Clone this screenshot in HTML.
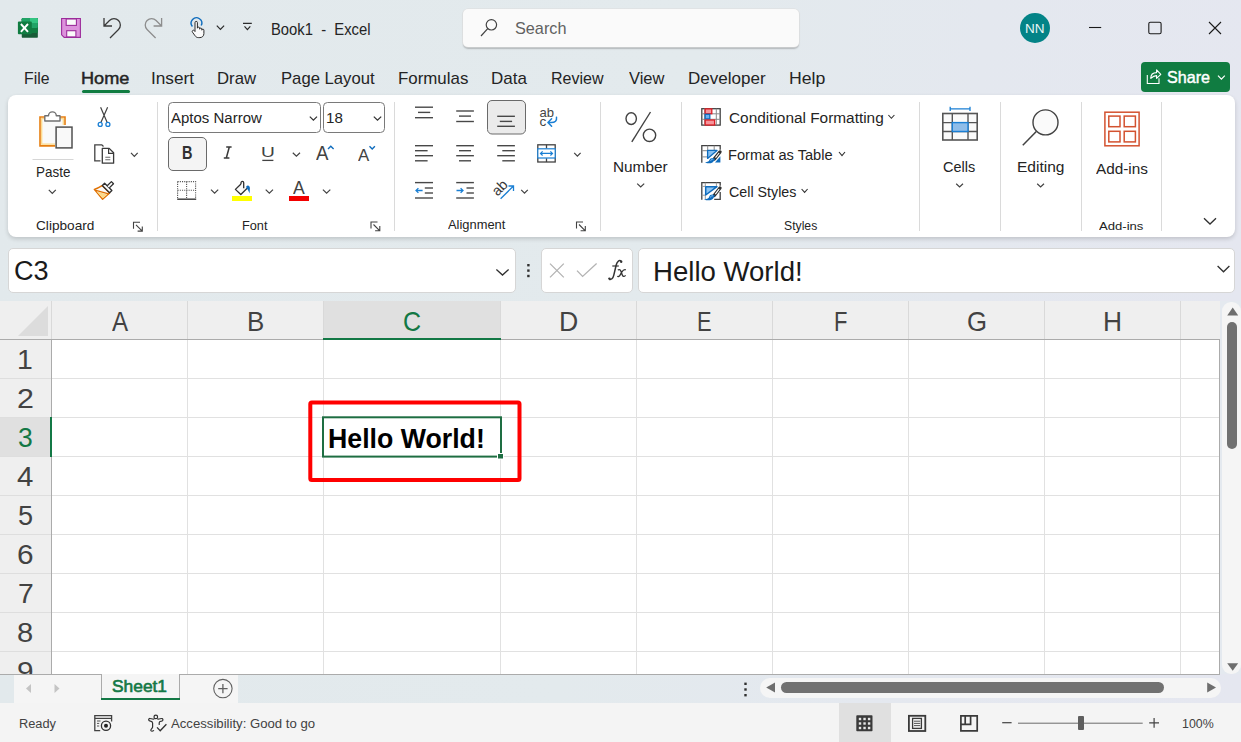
<!DOCTYPE html>
<html><head><meta charset="utf-8">
<style>
*{box-sizing:border-box;margin:0;padding:0}
html,body{width:1241px;height:742px;overflow:hidden;background:#e4e9ef;font-family:"Liberation Sans",sans-serif;color:#242424}
.abs{position:absolute}
svg{position:absolute;overflow:visible}
.t{position:absolute;white-space:nowrap;line-height:1;transform-origin:0 0}
</style></head><body>
<div class="abs" style="left:0;top:0;width:1241px;height:301px;background:linear-gradient(95deg,#e2e9ec 0%,#e3eaed 55%,#e4e8ef 78%,#e5e7f0 100%)"></div>
<!-- ribbon -->
<div class="abs" style="left:8px;top:95px;width:1227px;height:142px;background:#fff;border-radius:8px;box-shadow:0 2px 4px rgba(0,0,0,.16)"></div>
<!-- search -->
<div class="abs" style="left:463px;top:9px;width:336px;height:38px;background:#fafafa;border-radius:5px;box-shadow:0 0 0 0.6px #dedede,0 1.2px 1.5px rgba(0,0,0,.22)"></div>
<!-- avatar -->
<div class="abs" style="left:1020px;top:13px;width:30px;height:30px;border-radius:50%;background:#038387"></div>
<!-- share -->
<div class="abs" style="left:1141px;top:62px;width:89px;height:30px;border-radius:4px;background:#107c41"></div>
<!-- tab underline -->
<div class="abs" style="left:82px;top:90px;width:48px;height:3px;border-radius:2px;background:#107c41"></div>
<!-- formula bar -->
<div class="abs" style="left:8px;top:248px;width:508px;height:45px;background:#fff;border:1px solid #d6d6d6;border-radius:5px"></div>
<div class="abs" style="left:541px;top:248px;width:92px;height:45px;background:#fff;border:1px solid #d6d6d6;border-radius:5px"></div>
<div class="abs" style="left:638px;top:248px;width:597px;height:45px;background:#fff;border:1px solid #d6d6d6;border-radius:5px"></div>
<!-- grid -->
<div class="abs" style="left:0;top:0;width:1241px;height:674px;overflow:hidden">
<div class="abs" style="left:0;top:301px;width:1220px;height:373px;background:#fff"></div>
<div class="abs" style="left:0;top:301px;width:1220px;height:38px;background:#efefef"></div>
<div class="abs" style="left:0;top:339px;width:51px;height:335px;background:#efefef"></div>
<div class="abs" style="left:324px;top:301px;width:176px;height:38px;background:#e0e0e0"></div>
<div class="abs" style="left:0;top:418px;width:51px;height:38px;background:#e0e0e0"></div>
<div class="abs" style="left:51px;top:301px;width:1px;height:38px;background:#d9d9d9"></div>
<div class="abs" style="left:187px;top:301px;width:1px;height:38px;background:#d9d9d9"></div>
<div class="abs" style="left:323px;top:301px;width:1px;height:38px;background:#d9d9d9"></div>
<div class="abs" style="left:500px;top:301px;width:1px;height:38px;background:#d9d9d9"></div>
<div class="abs" style="left:636px;top:301px;width:1px;height:38px;background:#d9d9d9"></div>
<div class="abs" style="left:772px;top:301px;width:1px;height:38px;background:#d9d9d9"></div>
<div class="abs" style="left:908px;top:301px;width:1px;height:38px;background:#d9d9d9"></div>
<div class="abs" style="left:1044px;top:301px;width:1px;height:38px;background:#d9d9d9"></div>
<div class="abs" style="left:1180px;top:301px;width:1px;height:38px;background:#d9d9d9"></div>
<div class="abs" style="left:187px;top:340px;width:1px;height:334px;background:#e1e1e1"></div>
<div class="abs" style="left:323px;top:340px;width:1px;height:334px;background:#e1e1e1"></div>
<div class="abs" style="left:500px;top:340px;width:1px;height:334px;background:#e1e1e1"></div>
<div class="abs" style="left:636px;top:340px;width:1px;height:334px;background:#e1e1e1"></div>
<div class="abs" style="left:772px;top:340px;width:1px;height:334px;background:#e1e1e1"></div>
<div class="abs" style="left:908px;top:340px;width:1px;height:334px;background:#e1e1e1"></div>
<div class="abs" style="left:1044px;top:340px;width:1px;height:334px;background:#e1e1e1"></div>
<div class="abs" style="left:1180px;top:340px;width:1px;height:334px;background:#e1e1e1"></div>
<div class="abs" style="left:52px;top:378px;width:1167px;height:1px;background:#e1e1e1"></div>
<div class="abs" style="left:0;top:378px;width:51px;height:1px;background:#dedede"></div>
<div class="abs" style="left:52px;top:417px;width:1167px;height:1px;background:#e1e1e1"></div>
<div class="abs" style="left:0;top:417px;width:51px;height:1px;background:#dedede"></div>
<div class="abs" style="left:52px;top:456px;width:1167px;height:1px;background:#e1e1e1"></div>
<div class="abs" style="left:0;top:456px;width:51px;height:1px;background:#dedede"></div>
<div class="abs" style="left:52px;top:495px;width:1167px;height:1px;background:#e1e1e1"></div>
<div class="abs" style="left:0;top:495px;width:51px;height:1px;background:#dedede"></div>
<div class="abs" style="left:52px;top:534px;width:1167px;height:1px;background:#e1e1e1"></div>
<div class="abs" style="left:0;top:534px;width:51px;height:1px;background:#dedede"></div>
<div class="abs" style="left:52px;top:573px;width:1167px;height:1px;background:#e1e1e1"></div>
<div class="abs" style="left:0;top:573px;width:51px;height:1px;background:#dedede"></div>
<div class="abs" style="left:52px;top:612px;width:1167px;height:1px;background:#e1e1e1"></div>
<div class="abs" style="left:0;top:612px;width:51px;height:1px;background:#dedede"></div>
<div class="abs" style="left:52px;top:651px;width:1167px;height:1px;background:#e1e1e1"></div>
<div class="abs" style="left:0;top:651px;width:51px;height:1px;background:#dedede"></div>
<div class="abs" style="left:0;top:339px;width:1220px;height:1px;background:#ababab"></div>
<div class="abs" style="left:51px;top:339px;width:1px;height:335px;background:#ababab"></div>
<div class="abs" style="left:1219px;top:339px;width:1px;height:335px;background:#ababab"></div>
<div class="abs" style="left:323px;top:338px;width:178px;height:2px;background:#137845"></div>
<div class="abs" style="left:50px;top:417px;width:2px;height:40px;background:#137845"></div>
<svg style="left:0;top:0" width="1241" height="742"><polygon points="48,306 48,336 18,336" fill="#dcdcdc"/></svg>
<div class="t" style="left:111.90px;top:307.57px;font-size:27.91px;transform:scaleX(0.8664);color:#424242;font-weight:normal;font-style:normal;font-family:'Liberation Sans',sans-serif;">A</div>
<div class="t" style="left:246.93px;top:307.57px;font-size:27.91px;transform:scaleX(0.9290);color:#424242;font-weight:normal;font-style:normal;font-family:'Liberation Sans',sans-serif;">B</div>
<div class="t" style="left:403.25px;top:307.57px;font-size:27.91px;transform:scaleX(0.8958);color:#137845;font-weight:normal;font-style:normal;font-family:'Liberation Sans',sans-serif;">C</div>
<div class="t" style="left:558.87px;top:307.57px;font-size:27.91px;transform:scaleX(0.9556);color:#424242;font-weight:normal;font-style:normal;font-family:'Liberation Sans',sans-serif;">D</div>
<div class="t" style="left:697.25px;top:307.57px;font-size:27.91px;transform:scaleX(0.7818);color:#424242;font-weight:normal;font-style:normal;font-family:'Liberation Sans',sans-serif;">E</div>
<div class="t" style="left:833.74px;top:307.57px;font-size:27.91px;transform:scaleX(0.7883);color:#424242;font-weight:normal;font-style:normal;font-family:'Liberation Sans',sans-serif;">F</div>
<div class="t" style="left:967.21px;top:307.57px;font-size:27.91px;transform:scaleX(0.9230);color:#424242;font-weight:normal;font-style:normal;font-family:'Liberation Sans',sans-serif;">G</div>
<div class="t" style="left:1103.39px;top:307.57px;font-size:27.91px;transform:scaleX(0.9430);color:#424242;font-weight:normal;font-style:normal;font-family:'Liberation Sans',sans-serif;">H</div>
<div class="t" style="left:17.26px;top:345.43px;font-size:28.20px;transform:scaleX(1.0075);color:#424242;font-weight:normal;font-style:normal;font-family:'Liberation Sans',sans-serif;">1</div>
<div class="t" style="left:16.98px;top:384.43px;font-size:28.20px;transform:scaleX(1.0793);color:#424242;font-weight:normal;font-style:normal;font-family:'Liberation Sans',sans-serif;">2</div>
<div class="t" style="left:18.20px;top:423.43px;font-size:28.20px;transform:scaleX(0.9409);color:#137845;font-weight:normal;font-style:normal;font-family:'Liberation Sans',sans-serif;">3</div>
<div class="t" style="left:17.41px;top:462.43px;font-size:28.20px;transform:scaleX(1.0431);color:#424242;font-weight:normal;font-style:normal;font-family:'Liberation Sans',sans-serif;">4</div>
<div class="t" style="left:17.92px;top:501.43px;font-size:28.20px;transform:scaleX(0.9605);color:#424242;font-weight:normal;font-style:normal;font-family:'Liberation Sans',sans-serif;">5</div>
<div class="t" style="left:17.01px;top:540.43px;font-size:28.20px;transform:scaleX(1.0564);color:#424242;font-weight:normal;font-style:normal;font-family:'Liberation Sans',sans-serif;">6</div>
<div class="t" style="left:17.59px;top:579.43px;font-size:28.20px;transform:scaleX(1.0022);color:#424242;font-weight:normal;font-style:normal;font-family:'Liberation Sans',sans-serif;">7</div>
<div class="t" style="left:17.33px;top:618.43px;font-size:28.20px;transform:scaleX(1.0344);color:#424242;font-weight:normal;font-style:normal;font-family:'Liberation Sans',sans-serif;">8</div>
<div class="t" style="left:17.31px;top:657.43px;font-size:28.20px;transform:scaleX(1.0564);color:#424242;font-weight:normal;font-style:normal;font-family:'Liberation Sans',sans-serif;">9</div>
</div>
<!-- vertical scrollbar -->
<div class="abs" style="left:1222px;top:302px;width:19px;height:372px;background:#f5f5f5;border-radius:9px"></div>
<div class="abs" style="left:1227px;top:322px;width:10px;height:127px;background:#717171;border-radius:5px"></div>
<!-- sheet tabs bar -->
<div class="abs" style="left:0;top:674px;width:1241px;height:29px;background:linear-gradient(90deg,#e2e9ec 0%,#e3eaed 45%,#e4e8ef 70%,#e5e7f0 100%)"></div>
<div class="abs" style="left:14px;top:674px;width:224px;height:29px;background:#f5f5f5"></div>
<div class="abs" style="left:0;top:674px;width:101px;height:1px;background:#ababab"></div>
<div class="abs" style="left:180px;top:674px;width:1040px;height:1px;background:#ababab"></div>
<div class="abs" style="left:101px;top:674px;width:1px;height:25px;background:#ababab"></div>
<div class="abs" style="left:179px;top:674px;width:1px;height:25px;background:#ababab"></div>
<div class="abs" style="left:101px;top:698px;width:79px;height:2px;background:#137845"></div>
<div class="abs" style="left:760px;top:678px;width:461px;height:20px;background:#f5f5f5;border-radius:10px"></div>
<div class="abs" style="left:781px;top:682px;width:383px;height:11px;background:#717171;border-radius:6px"></div>
<!-- status bar -->
<div class="abs" style="left:0;top:703px;width:1241px;height:39px;background:#f4f4f4"></div>
<div class="abs" style="left:839px;top:703px;width:52px;height:39px;background:#e0e0e0"></div>
<svg style="left:0;top:0" width="1241" height="742"><rect x="21.75" y="18" width="16.1" height="19.85" rx="1.2" fill="#185c37"/>
<rect x="21.75" y="18" width="16.1" height="15" rx="1.2" fill="#107c41"/>
<rect x="21.75" y="18" width="16.1" height="10" rx="1.2" fill="#21a366"/>
<path d="M30,18 H36.65 a1.2,1.2 0 0 1 1.2,1.2 V23 H30 Z" fill="#33c481"/>
<rect x="17.9" y="21.6" width="13.9" height="12.7" rx="1" fill="#107c41"/>
<path d="M20.9,24 L28,31.9 M28,24 L20.9,31.9" stroke="#fff" stroke-width="1.9"/>
<path d="M61.6,18.5 H80.4 V37.4 H64.2 L61.6,34.8 Z" fill="#dc92dc" stroke="#9c2c9b" stroke-width="1.1"/>
<rect x="66.2" y="19" width="10.2" height="6.4" fill="#fafafa" stroke="#9c2c9b" stroke-width="1.1"/>
<rect x="66.7" y="30.7" width="9.2" height="6.2" fill="#fafafa" stroke="#9c2c9b" stroke-width="1.1"/>
<path d="M104,18 V26 H112 M104.5,25.5 L109.5,20.5 A6.36,6.36 0 0 1 118.5,29.5 L110,38" stroke="#3a3a3a" stroke-width="1.3" fill="none"/>
<g transform="translate(265.6,0) scale(-1,1)"><path d="M104,18 V26 H112 M104.5,25.5 L109.5,20.5 A6.36,6.36 0 0 1 118.5,29.5 L110,38" stroke="#8d8d8d" stroke-width="1.3" fill="none"/></g>
<path d="M192.4,26.5 A5.3,5.3 0 1 1 201.2,25.5" stroke="#0f6cbd" stroke-width="1.4" fill="none"/>
<path d="M195,31.5 V22.6 a1.2,1.2 0 0 1 2.4,0 V28.2 a1.1,1.1 0 0 1 2.2,0 V29.2 a1.1,1.1 0 0 1 2.2,0 V30.2 a1.05,1.05 0 0 1 2.1,0 V33.6 c0,2.4 -1.8,4 -4,4 h-1.6 c-1.4,0 -2.4,-0.7 -3.2,-1.8 l-2.6,-3.6 a1.2,1.2 0 0 1 1.9,-1.5 z" fill="#fafafa" stroke="#2b2b2b" stroke-width="1"/>
<path d="M216.8,25.6 L220.45,29.4 L224.1,25.6" stroke="#2b2b2b" stroke-width="1.2" fill="none"/>
<path d="M243,23.3 H251.8 M244.5,26.4 L247.4,29.6 L250.3,26.4" stroke="#2b2b2b" stroke-width="1.2" fill="none"/>
<circle cx="491.4" cy="24.8" r="5.2" stroke="#424242" stroke-width="1.2" fill="none"/><path d="M487.7,28.6 L481,36" stroke="#424242" stroke-width="1.2"/>
<path d="M1089,27.5 H1101.2" stroke="#1a1a1a" stroke-width="1.1"/><rect x="1148.8" y="22.2" width="12.3" height="11.6" rx="1.6" stroke="#1a1a1a" stroke-width="1.1" fill="none"/><path d="M1209,22 L1221,34 M1221,22 L1209,34" stroke="#1a1a1a" stroke-width="1.1"/>
<path d="M1147.3,75 V83.5 H1159 V78.3" stroke="#fff" stroke-width="1.1" fill="none"/>
<path d="M1150.8,78.3 C1150.8,74.5 1153,72.6 1156.6,72.6 V69.8 L1160.8,74.4 L1156.6,78.4 V75.6 C1154.2,75.6 1152.6,76.5 1150.8,78.3 Z" stroke="#fff" stroke-width="1.1" fill="none" stroke-linejoin="round"/>
<path d="M1218,75.6 L1221.4,79.2 L1224.8,75.6" stroke="#fff" stroke-width="1.2" fill="none"/></svg><svg style="left:0;top:0" width="1241" height="742"><path d="M157.5,102 V231" stroke="#dadada" stroke-width="1"/>
<path d="M394.5,102 V231" stroke="#dadada" stroke-width="1"/>
<path d="M600.5,102 V231" stroke="#dadada" stroke-width="1"/>
<path d="M681.5,102 V231" stroke="#dadada" stroke-width="1"/>
<path d="M919.5,102 V231" stroke="#dadada" stroke-width="1"/>
<path d="M1000.5,102 V231" stroke="#dadada" stroke-width="1"/>
<path d="M1081.5,102 V231" stroke="#dadada" stroke-width="1"/>
<path d="M1161.5,102 V231" stroke="#dadada" stroke-width="1"/>
<path d="M65,125 V117 H40 V145.9 H55" stroke="#e67e10" stroke-width="1.6" fill="#f9f9f9"/>
<path d="M63.3,125 V118.7 H41.7 V144.2 H55" stroke="#fcd98a" stroke-width="1.3" fill="none"/>
<path d="M44.8,121 V115.8 H48.5 A3.9,3.9 0 0 1 56.3,115.8 H60 V121 Z" stroke="#707070" stroke-width="1.4" fill="#fff" stroke-linejoin="round"/>
<rect x="56.1" y="127.1" width="15.9" height="20.8" stroke="#505050" stroke-width="1.5" fill="#f9f9f9"/>
<path d="M32.5,159.5 H73.5" stroke="#d6d6d6" stroke-width="1"/>
<path d="M48.8,189.8 L52.3,193.4 L55.8,189.8" stroke="#424242" stroke-width="1.2" fill="none"/>
<path d="M100.6,107.3 L107.2,122.6 M107.6,107.3 L100.9,122.6" stroke="#424242" stroke-width="1.2" fill="none"/>
<circle cx="100.2" cy="124.4" r="2" stroke="#1a7fd4" stroke-width="1.3" fill="#fff"/>
<circle cx="107.9" cy="124.4" r="2" stroke="#1a7fd4" stroke-width="1.3" fill="#fff"/>
<path d="M100.5,160.9 H94.8 V144.8 H101.8 L103.5,146.5" stroke="#424242" stroke-width="1.3" fill="none"/>
<path d="M102.3,148.4 H109.2 L113.6,152.8 V163.2 H102.3 Z" stroke="#3a3a3a" stroke-width="1.3" fill="#fff" stroke-linejoin="round"/>
<path d="M108.6,148.6 V153.3 H113.6" stroke="#3a3a3a" stroke-width="1.2" fill="none"/>
<path d="M105.3,157.2 H110.3 M105.3,159.7 H110.3" stroke="#6a6a6a" stroke-width="1.1"/>
<path d="M131,152.8 L134.35,156.4 L137.7,152.8" stroke="#424242" stroke-width="1.2" fill="none"/>
<path d="M102.1,185.6 C99.2,187.4 97.2,188.6 94.3,189.4 L102.6,199.2 L109.6,193 Z" stroke="#e07000" stroke-width="1.4" fill="#fafafa" stroke-linejoin="round"/>
<path d="M96.6,191.6 L107.4,194.4 L102.6,198.2 Z" fill="#fbd98a"/>
<path d="M95,190.2 L108.6,193.8" stroke="#e07000" stroke-width="1.2"/>
<path d="M102.3,185.5 L104.6,183.2 L111.9,190.5 L109.6,192.8 Z" stroke="#303030" stroke-width="1.3" fill="#fff" stroke-linejoin="round"/>
<path d="M107.2,185.8 L111.4,181.6 L113.5,183.7 L109.3,187.9" stroke="#303030" stroke-width="1.3" fill="#fff" stroke-linejoin="round"/>
<path d="M133.5,228.8 V222.3 H140" stroke="#424242" stroke-width="1.1" fill="none"/><path d="M136,224.8 L142.3,231.10000000000002 M142.3,226.4 V231.10000000000002 H137.6" stroke="#424242" stroke-width="1.1" fill="none"/>
<rect x="168.5" y="102.5" width="152" height="30" rx="4" stroke="#7a7a7a" stroke-width="1" fill="#fff"/>
<rect x="323.5" y="102.5" width="61" height="30" rx="4" stroke="#7a7a7a" stroke-width="1" fill="#fff"/>
<path d="M309.8,116.6 L313.4,120.2 L317,116.6" stroke="#303030" stroke-width="1.2" fill="none"/>
<path d="M373.8,116.6 L377.5,120.2 L381.2,116.6" stroke="#303030" stroke-width="1.2" fill="none"/>
<rect x="168.5" y="137.5" width="38" height="33" rx="4.5" stroke="#6a6a6a" stroke-width="1" fill="#f4f4f4"/>
<path d="M262.3,160.4 H273.4" stroke="#424242" stroke-width="1.3"/>
<path d="M292.8,152.8 L296.4,156.2 L300,152.8" stroke="#424242" stroke-width="1.2" fill="none"/>
<path d="M328,149 L330.8,146.2 L333.6,149" stroke="#0f6cbd" stroke-width="1.4" fill="none"/>
<path d="M369.5,146.2 L372.2,148.9 L374.9,146.2" stroke="#0f6cbd" stroke-width="1.4" fill="none"/>
<path d="M177.6,181.6 H195.6 V198.8 M177.6,181.6 V198.8 M186.6,181.6 V198.8 M177.6,190.2 H195.6" stroke="#555" stroke-width="1.1" stroke-dasharray="1.1,1.1" fill="none"/>
<path d="M177.2,199.2 H196.2" stroke="#424242" stroke-width="1.5"/>
<path d="M211,189.6 L214.6,193.2 L218.2,189.6" stroke="#424242" stroke-width="1.2" fill="none"/>
<path d="M241,184 L235.4,189.4 L240.8,194.5 L247.2,188.3" stroke="#303030" stroke-width="1.3" fill="#fafafa" stroke-linejoin="round"/>
<path d="M241,184 V182.8 A1.35,1.35 0 0 1 243.7,182.8 V188.2" stroke="#303030" stroke-width="1.3" fill="none"/>
<path d="M246.2,186.6 C247.4,184.8 249.9,185.4 249.9,188.2 L249.6,193.6 C248.9,191.8 248.4,190 246.5,188.2 Z" fill="#0f6cbd"/>
<rect x="232" y="196" width="20" height="5" fill="#ffff00"/>
<path d="M265.7,189.6 L269.35,193.2 L273,189.6" stroke="#424242" stroke-width="1.2" fill="none"/>
<rect x="289" y="196" width="20" height="5" fill="#f20000"/>
<path d="M322.9,189.6 L326.6,193.2 L330.3,189.6" stroke="#424242" stroke-width="1.2" fill="none"/>
<path d="M371.0,228.5 V222.0 H377.5" stroke="#424242" stroke-width="1.1" fill="none"/><path d="M373.5,224.5 L379.8,230.8 M379.8,226.1 V230.8 H375.1" stroke="#424242" stroke-width="1.1" fill="none"/>
<path d="M415,107.2 H433" stroke="#484848" stroke-width="1.4"/><path d="M418,112.4 H430.2" stroke="#484848" stroke-width="1.4"/><path d="M415,117.7 H433" stroke="#484848" stroke-width="1.4"/>
<path d="M456.2,111 H473.9" stroke="#484848" stroke-width="1.4"/><path d="M459,116.1 H471" stroke="#484848" stroke-width="1.4"/><path d="M456.2,121.5 H473.9" stroke="#484848" stroke-width="1.4"/>
<rect x="487.5" y="100.5" width="38" height="33.5" rx="4.5" stroke="#6a6a6a" stroke-width="1" fill="#ebebeb"/>
<path d="M497.2,116.3 H514.9" stroke="#484848" stroke-width="1.4"/><path d="M499.8,121.4 H512.1" stroke="#484848" stroke-width="1.4"/><path d="M497.2,126.3 H514.9" stroke="#484848" stroke-width="1.4"/>
<path d="M415,145.7 H433" stroke="#484848" stroke-width="1.4"/><path d="M415,150.7 H427.6" stroke="#484848" stroke-width="1.4"/><path d="M415,155.7 H433" stroke="#484848" stroke-width="1.4"/><path d="M415,160.8 H427.6" stroke="#484848" stroke-width="1.4"/>
<path d="M456.2,145.7 H473.9" stroke="#484848" stroke-width="1.4"/><path d="M459,150.7 H471" stroke="#484848" stroke-width="1.4"/><path d="M456.2,155.7 H473.9" stroke="#484848" stroke-width="1.4"/><path d="M459,160.8 H471" stroke="#484848" stroke-width="1.4"/>
<path d="M497.2,145.7 H514.9" stroke="#484848" stroke-width="1.4"/><path d="M502.3,150.7 H514.9" stroke="#484848" stroke-width="1.4"/><path d="M497.2,155.7 H514.9" stroke="#484848" stroke-width="1.4"/><path d="M502.3,160.8 H514.9" stroke="#484848" stroke-width="1.4"/>
<text x="0" y="0" font-family="Liberation Sans" font-size="13.6" fill="#444" transform="translate(539.5,116.6) scale(0.96,1)">ab</text>
<text x="0" y="0" font-family="Liberation Sans" font-size="13.6" fill="#444" transform="translate(539.6,125.7)">c</text>
<path d="M556.5,117.2 C557,120.8 555.2,122.5 551.2,122.5 H548.2 M551.6,118.8 L547.9,122.5 L551.6,126.3" stroke="#1a7fd4" stroke-width="1.5" fill="none" stroke-linecap="round" stroke-linejoin="round"/>
<rect x="537.8" y="144.8" width="17.4" height="17.2" stroke="#424242" stroke-width="1.3" fill="#fff"/>
<path d="M546.5,144.8 V148.6 M546.5,158.2 V162" stroke="#424242" stroke-width="1.3"/>
<rect x="537.8" y="148.8" width="17.4" height="9.2" stroke="#1a7fd4" stroke-width="1.2" fill="#fff"/>
<path d="M540.5,153.4 H552.5 M542.6,151.3 L540.5,153.4 L542.6,155.5 M550.4,151.3 L552.5,153.4 L550.4,155.5" stroke="#1a7fd4" stroke-width="1.2" fill="none"/>
<path d="M574.2,152.8 L577.4000000000001,156.2 L580.6,152.8" stroke="#424242" stroke-width="1.2" fill="none"/>
<path d="M415,182.6 H433" stroke="#484848" stroke-width="1.4"/><path d="M424.8,188 H433" stroke="#484848" stroke-width="1.4"/><path d="M424.8,193 H433" stroke="#484848" stroke-width="1.4"/><path d="M415,198 H433" stroke="#484848" stroke-width="1.4"/>
<path d="M422.6,190.5 H416 M418.4,188.1 L416,190.5 L418.4,192.9" stroke="#1a7fd4" stroke-width="1.3" fill="none"/>
<path d="M456.2,182.6 H473.9" stroke="#484848" stroke-width="1.4"/><path d="M466.5,188 H473.9" stroke="#484848" stroke-width="1.4"/><path d="M466.5,193 H473.9" stroke="#484848" stroke-width="1.4"/><path d="M456.2,198 H473.9" stroke="#484848" stroke-width="1.4"/>
<path d="M456.5,190.5 H463 M460.6,188.1 L463,190.5 L460.6,192.9" stroke="#1a7fd4" stroke-width="1.3" fill="none"/>
<text x="0" y="0" font-family="Liberation Sans" font-size="14.4" fill="#3a3a3a" transform="translate(497.4,196.8) rotate(-45)">ab</text>
<path d="M500.6,198.8 L513.5,186 M508.5,186 H513.5 V191" stroke="#1a7fd4" stroke-width="1.3" fill="none"/>
<path d="M521.2,189.8 L524.5,193.2 L527.8,189.8" stroke="#424242" stroke-width="1.2" fill="none"/>
<path d="M576.5,228.5 V222.0 H583" stroke="#424242" stroke-width="1.1" fill="none"/><path d="M579,224.5 L585.3,230.8 M585.3,226.1 V230.8 H580.6" stroke="#424242" stroke-width="1.1" fill="none"/>
<ellipse cx="631.2" cy="118.6" rx="5.2" ry="5.9" stroke="#424242" stroke-width="1.4" fill="none"/>
<ellipse cx="649.5" cy="135.3" rx="6.2" ry="6.2" stroke="#424242" stroke-width="1.4" fill="none"/>
<path d="M650.5,112 L631.8,141.8" stroke="#424242" stroke-width="1.4"/>
<path d="M637.2,183.6 L640.7,187 L644.2,183.6" stroke="#424242" stroke-width="1.2" fill="none"/>
<rect x="701.8" y="108.7" width="18.4" height="16.4" fill="#fff" stroke="#424242" stroke-width="1.3"/>
<path d="M704.6,108.7 V125.1 M716.3,108.7 V125.1 M701.8,113.8 H720.2 M701.8,119.3 H720.2" stroke="#8a8a8a" stroke-width="1" fill="none"/>
<rect x="705.2" y="108.9" width="6.6" height="4.8" fill="#f5959b" stroke="#dd1f26" stroke-width="1.3"/>
<rect x="705.2" y="114.3" width="4.6" height="4.6" fill="#6cb0f0" stroke="#0f6cbd" stroke-width="1.3"/>
<rect x="705.2" y="120" width="9.4" height="5" fill="#f5959b" stroke="#dd1f26" stroke-width="1.3"/>
<path d="M701.8,162.7 V145.7 H720.2 V149.8" stroke="#424242" stroke-width="1.3" fill="none"/>
<path d="M701.8,150.7 H707 M701.8,156.9 H707 M707.7,145.7 V150 M714.2,145.7 V150" stroke="#8a8a8a" stroke-width="1" fill="none"/>
<path d="M707.6,150.4 H717 L707.6,158.4 Z" fill="#86c0f2" stroke="#0f6cbd" stroke-width="1.3" stroke-linejoin="round"/>
<path d="M720.4,156.2 V162.6 H715 Z" fill="#0f6cbd"/><path d="M720.0,151.9 L714.4,158.9" stroke="#303030" stroke-width="3.3" stroke-linecap="round"/><path d="M719.1,153.0 L715.5,157.6" stroke="#fff" stroke-width="1.1"/><path d="M714.8,158.70000000000002 C712.8,157.3 710.0,158.1 709.4,160.1 C709.0,161.5 707.8,162.0 705,162.4 C708.4,163.9 712.4,163.8 713.8,161.1 C714.6999999999999,160.3 715.0,159.5 714.8,158.70000000000002 Z" fill="#0f6cbd"/><path d="M713.1999999999999,159.3 C711.8,158.70000000000002 710.6,159.70000000000002 710.8,160.9" stroke="#8cc4f2" stroke-width="0.9" fill="none"/>
<path d="M701.8,199.7 V182.7 H720.2 V185.8 M720.2,191.9 V199.3 H714.2" stroke="#424242" stroke-width="1.3" fill="none"/>
<path d="M705.3,182.7 V186 M705.3,195.5 V199.3 M716.4,182.7 V186 M701.8,186.4 H705 M701.8,195.2 H705" stroke="#9a9a9a" stroke-width="1" fill="none"/>
<path d="M705.7,186.7 H717 L705.7,195 Z" fill="#8cc4f2" stroke="#0f6cbd" stroke-width="1.5" stroke-linejoin="round"/><path d="M720.0,188.1 L714.2,195.5" stroke="#303030" stroke-width="3.3" stroke-linecap="round"/><path d="M719.1,189.2 L715.3000000000001,194.2" stroke="#fff" stroke-width="1.1"/><path d="M714.6,195.3 C712.6,193.9 709.8000000000001,194.7 709.2,196.7 C708.8000000000001,198.1 707.6,199.0 704,199.4 C707.4,200.9 712.2,200.8 713.6,197.7 C714.5,196.9 714.8000000000001,196.1 714.6,195.3 Z" fill="#0f6cbd"/><path d="M713.0,195.9 C711.6,195.3 710.4000000000001,196.3 710.6,197.5" stroke="#8cc4f2" stroke-width="0.9" fill="none"/>
<path d="M888.4,115 L891.4,118.3 L894.4,115" stroke="#303030" stroke-width="1.1" fill="none"/>
<path d="M839,152 L842.0,155.6 L845,152" stroke="#303030" stroke-width="1.1" fill="none"/>
<path d="M801.6,189 L804.6,192.4 L807.6,189" stroke="#303030" stroke-width="1.1" fill="none"/>
<rect x="942.8" y="113.5" width="34.4" height="26.5" fill="#fafafa" stroke="#555" stroke-width="1.6"/>
<path d="M952.3,113.5 V140 M968,113.5 V140 M942.8,122.6 H977.2 M942.8,131.5 H977.2" stroke="#555" stroke-width="1.4" fill="none"/>
<rect x="952.3" y="122.6" width="15.7" height="8.9" fill="#8fbde9" stroke="#1a7fd4" stroke-width="1.4"/>
<path d="M950.2,108.9 H970 M950.2,106.8 V111 M970,106.8 V111" stroke="#1a7fd4" stroke-width="1.3" fill="none"/>
<path d="M956.2,183.8 L959.6,187 L963,183.8" stroke="#424242" stroke-width="1.2" fill="none"/>
<circle cx="1045.5" cy="122.4" r="12.5" stroke="#424242" stroke-width="1.4" fill="#fafafa"/><path d="M1036.3,131.4 L1022.8,145.2" stroke="#424242" stroke-width="1.5"/>
<path d="M1037.2,183.8 L1040.6,187 L1044,183.8" stroke="#424242" stroke-width="1.2" fill="none"/>
<rect x="1104.9" y="112.2" width="34.2" height="33.6" stroke="#d35230" stroke-width="1.5" fill="#fff"/>
<rect x="1108.8" y="116.1" width="11.2" height="10.6" stroke="#d35230" stroke-width="1.5" fill="none"/>
<rect x="1124.2" y="116.1" width="11.2" height="10.6" stroke="#d35230" stroke-width="1.5" fill="none"/>
<rect x="1108.8" y="131.3" width="11.2" height="10.6" stroke="#d35230" stroke-width="1.5" fill="none"/>
<rect x="1124.2" y="131.3" width="11.2" height="10.6" stroke="#d35230" stroke-width="1.5" fill="none"/>
<path d="M1204,218.2 L1210.0,224 L1216,218.2" stroke="#303030" stroke-width="1.3" fill="none"/>
<path d="M496.4,269.4 L502.5,275 L508.6,269.4" stroke="#303030" stroke-width="1.3" fill="none"/>
<rect x="527.2" y="264" width="2.4" height="2.4" fill="#303030"/><rect x="527.2" y="269.4" width="2.4" height="2.4" fill="#303030"/><rect x="527.2" y="274.8" width="2.4" height="2.4" fill="#303030"/>
<path d="M550,263.6 L563.8,277.4 M563.8,263.6 L550,277.4" stroke="#b3b3b3" stroke-width="1.3"/>
<path d="M577,270.6 L582.6,276.4 L596.6,263.6" stroke="#b3b3b3" stroke-width="1.3" fill="none"/>
<path d="M1217.6,266 L1223.5,271.8 L1229.4,266" stroke="#303030" stroke-width="1.3" fill="none"/>
<rect x="323" y="417.3" width="178" height="39.3" stroke="#1e6e42" stroke-width="2" fill="none"/>
<rect x="497.5" y="453.5" width="6" height="5.5" fill="#1e6e42" stroke="#fff" stroke-width="1"/>
<rect x="310.3" y="402.6" width="209.2" height="77.5" rx="1.5" stroke="#ff0000" stroke-width="4" fill="none"/>
<path d="M1227.2,315.4 L1232.7,307.6 L1238.2,315.4 Z" fill="#6e6e6e"/>
<path d="M1227.2,663.2 L1232.7,670.8 L1238.2,663.2 Z" fill="#6e6e6e"/>
<path d="M775,682.6 L766.2,687.6 L775,692.6 Z" fill="#6e6e6e"/>
<path d="M1207.2,682.4 L1216,687.4 L1207.2,692.4 Z" fill="#6e6e6e"/>
<rect x="744.3" y="682.6" width="2.4" height="2.4" fill="#303030"/><rect x="744.3" y="688.3" width="2.4" height="2.4" fill="#303030"/><rect x="744.3" y="694" width="2.4" height="2.4" fill="#303030"/>
<path d="M31,684 L26,688.5 L31,693 Z" fill="#c4c4c4"/><path d="M54.5,684 L59.5,688.5 L54.5,693 Z" fill="#c4c4c4"/>
<circle cx="222.9" cy="688.6" r="9.2" stroke="#616161" stroke-width="1.1" fill="none"/><path d="M218.2,688.6 H227.6 M222.9,683.9 V693.3" stroke="#616161" stroke-width="1.3"/>
<path d="M100.2,730.6 H94.8 V715.6 H111.6 V721.4" stroke="#424242" stroke-width="1.3" fill="none"/>
<path d="M94.8,718.4 H111.6" stroke="#424242" stroke-width="1.2"/>
<path d="M97,721 H100.5 M97,723.4 H99.2 M97,726 H99.2" stroke="#555" stroke-width="1"/>
<circle cx="106" cy="725.8" r="4.6" fill="#f3f3f3" stroke="#303030" stroke-width="1.3"/><circle cx="106" cy="725.8" r="2" fill="#222"/>
<circle cx="155.8" cy="716.9" r="1.8" stroke="#303030" stroke-width="1.2" fill="none"/>
<path d="M149.4,718.5 C148,719.3 148.6,721 150.4,721.1 C151.6,721.3 152.5,721.7 152.6,723 V727 C152.6,728.3 150.6,729 150.8,730.4 C151,731.3 152.6,731.4 153.6,730.6 M149.4,718.5 C151,718.3 152.2,719.4 154,719 M157.6,719 C159.4,719.4 160.6,718.3 162.2,718.5 C163.5,719.3 163,720.9 161.5,721.2 C160.2,721.4 159.2,721.7 159.2,722.7 V724.5" stroke="#303030" stroke-width="1.2" fill="none" stroke-linecap="round"/>
<path d="M157,727.4 L160.2,730.8 L166.4,724.2" stroke="#303030" stroke-width="1.3" fill="none"/>
<rect x="856.3" y="715.3" width="16.2" height="16" rx="0.8" fill="#3a3a3a"/><rect x="858.80" y="717.80" width="2.4" height="2.4" fill="#e6e6e6"/><rect x="858.80" y="722.30" width="2.4" height="2.4" fill="#e6e6e6"/><rect x="858.80" y="726.80" width="2.4" height="2.4" fill="#e6e6e6"/><rect x="863.35" y="717.80" width="2.4" height="2.4" fill="#e6e6e6"/><rect x="863.35" y="722.30" width="2.4" height="2.4" fill="#e6e6e6"/><rect x="863.35" y="726.80" width="2.4" height="2.4" fill="#e6e6e6"/><rect x="867.90" y="717.80" width="2.4" height="2.4" fill="#e6e6e6"/><rect x="867.90" y="722.30" width="2.4" height="2.4" fill="#e6e6e6"/><rect x="867.90" y="726.80" width="2.4" height="2.4" fill="#e6e6e6"/>
<rect x="908.9" y="715.8" width="16.4" height="15.2" stroke="#3a3a3a" stroke-width="1.8" fill="none"/>
<rect x="912.6" y="718.4" width="8.8" height="10" stroke="#3a3a3a" stroke-width="1.3" fill="none"/>
<path d="M914,721.2 H920.2 M914,723.4 H920.2 M914,725.6 H920.2" stroke="#424242" stroke-width="0.9"/>
<path d="M960.9,730.8 V715.8 H977.2 V730.8 Z M960.9,724.4 H970.6 V715.8 M965.2,715.8 V724.4" stroke="#3a3a3a" stroke-width="1.7" fill="none"/>
<path d="M1002.2,722.7 H1011.6" stroke="#424242" stroke-width="1.2"/>
<path d="M1018,723.2 H1142.7" stroke="#6b6b6b" stroke-width="1"/>
<rect x="1078" y="716" width="6" height="14" rx="1" fill="#5e5e5e"/>
<path d="M1149.2,722.8 H1159 M1154.1,717.9 V727.7" stroke="#424242" stroke-width="1.2"/>
<path d="M621.3,261.3 C619.4,259.6 617.2,261 616.2,265 L613.8,275.2 C613,278.6 611.2,280 609.2,279.2" stroke="#333" stroke-width="1.5" fill="none"/>
<circle cx="621.2" cy="261.8" r="1.2" fill="#333"/><circle cx="609.4" cy="278.6" r="1.2" fill="#333"/>
<path d="M612.3,266 H618.8" stroke="#333" stroke-width="1.2"/>
<path d="M617.8,270 C619.5,269 620.6,269.8 621.2,272 L622.2,274.8 C622.8,276.8 624,277 625.6,275.4 M625.8,269.8 C624.2,269 623.2,269.8 621.6,272.4 L620.2,274.8 C619.2,276.5 618.2,277 617.3,276.3" stroke="#333" stroke-width="1.3" fill="none"/>
<path d="M226.2,147 H231.6 M223.8,158 H229.4 M229.3,147 L226.3,158" stroke="#3a3a3a" stroke-width="1.5" fill="none"/></svg>
<div class="t" style="left:270.82px;top:20.62px;font-size:16.28px;transform:scaleX(0.9098);color:#242424;font-weight:normal;font-style:normal;font-family:'Liberation Sans',sans-serif;">Book1&nbsp;&nbsp;-&nbsp;&nbsp;Excel</div>
<div class="t" style="left:514.85px;top:20.57px;font-size:16.57px;transform:scaleX(0.9802);color:#616161;font-weight:normal;font-style:normal;font-family:'Liberation Sans',sans-serif;">Search</div>
<div class="t" style="left:1025.32px;top:21.85px;font-size:13.52px;transform:scaleX(1.0019);color:#e8f6f6;font-weight:normal;font-style:normal;font-family:'Liberation Sans',sans-serif;">NN</div>
<div class="t" style="left:24.44px;top:71.07px;font-size:16.57px;transform:scaleX(0.9526);color:#242424;font-weight:normal;font-style:normal;font-family:'Liberation Sans',sans-serif;">File</div>
<div class="t" style="left:151.05px;top:71.07px;font-size:16.57px;transform:scaleX(1.0404);color:#242424;font-weight:normal;font-style:normal;font-family:'Liberation Sans',sans-serif;">Insert</div>
<div class="t" style="left:217.36px;top:71.07px;font-size:16.57px;transform:scaleX(1.0088);color:#242424;font-weight:normal;font-style:normal;font-family:'Liberation Sans',sans-serif;">Draw</div>
<div class="t" style="left:280.87px;top:71.07px;font-size:16.57px;transform:scaleX(1.0059);color:#242424;font-weight:normal;font-style:normal;font-family:'Liberation Sans',sans-serif;">Page Layout</div>
<div class="t" style="left:398.35px;top:71.07px;font-size:16.57px;transform:scaleX(1.0189);color:#242424;font-weight:normal;font-style:normal;font-family:'Liberation Sans',sans-serif;">Formulas</div>
<div class="t" style="left:491.14px;top:71.07px;font-size:16.57px;transform:scaleX(1.0255);color:#242424;font-weight:normal;font-style:normal;font-family:'Liberation Sans',sans-serif;">Data</div>
<div class="t" style="left:551.32px;top:71.07px;font-size:16.57px;transform:scaleX(0.9674);color:#242424;font-weight:normal;font-style:normal;font-family:'Liberation Sans',sans-serif;">Review</div>
<div class="t" style="left:629.40px;top:71.07px;font-size:16.57px;transform:scaleX(0.9959);color:#242424;font-weight:normal;font-style:normal;font-family:'Liberation Sans',sans-serif;">View</div>
<div class="t" style="left:688.04px;top:71.07px;font-size:16.57px;transform:scaleX(1.0286);color:#242424;font-weight:normal;font-style:normal;font-family:'Liberation Sans',sans-serif;">Developer</div>
<div class="t" style="left:788.79px;top:71.07px;font-size:16.57px;transform:scaleX(1.0668);color:#242424;font-weight:normal;font-style:normal;font-family:'Liberation Sans',sans-serif;">Help</div>
<div class="t" style="left:80.95px;top:71.07px;font-size:16.57px;transform:scaleX(1.0952);color:#242424;font-weight:normal;font-style:normal;font-family:'Liberation Sans',sans-serif;-webkit-text-stroke:0.45px #242424">Home</div>
<div class="t" style="left:1166.96px;top:69.77px;font-size:16.57px;transform:scaleX(0.9731);color:#ffffff;font-weight:normal;font-style:normal;font-family:'Liberation Sans',sans-serif;-webkit-text-stroke:0.45px #ffffff">Share</div>
<div class="t" style="left:35.53px;top:165.02px;font-size:14.97px;transform:scaleX(0.8976);color:#242424;font-weight:normal;font-style:normal;font-family:'Liberation Sans',sans-serif;">Paste</div>
<div class="t" style="left:35.92px;top:219.06px;font-size:13.15px;transform:scaleX(1.0381);color:#242424;font-weight:normal;font-style:normal;font-family:'Liberation Sans',sans-serif;">Clipboard</div>
<div class="t" style="left:171.40px;top:110.55px;font-size:14.83px;transform:scaleX(1.0109);color:#242424;font-weight:normal;font-style:normal;font-family:'Liberation Sans',sans-serif;">Aptos Narrow</div>
<div class="t" style="left:325.94px;top:110.55px;font-size:14.83px;transform:scaleX(1.0190);color:#242424;font-weight:normal;font-style:normal;font-family:'Liberation Sans',sans-serif;">18</div>
<div class="t" style="left:182.03px;top:144.56px;font-size:17.88px;transform:scaleX(0.8120);color:#303030;font-weight:bold;font-style:normal;font-family:'Liberation Sans',sans-serif;">B</div>
<div class="t" style="left:260.96px;top:145.44px;font-size:14.24px;transform:scaleX(1.3436);color:#424242;font-weight:normal;font-style:normal;font-family:'Liberation Sans',sans-serif;">U</div>
<div class="t" style="left:315.50px;top:142.55px;font-size:20.49px;transform:scaleX(0.9103);color:#424242;font-weight:normal;font-style:normal;font-family:'Liberation Sans',sans-serif;">A</div>
<div class="t" style="left:358.00px;top:146.52px;font-size:16.28px;transform:scaleX(1.0360);color:#424242;font-weight:normal;font-style:normal;font-family:'Liberation Sans',sans-serif;">A</div>
<div class="t" style="left:293.20px;top:178.60px;font-size:18.90px;transform:scaleX(0.9321);color:#424242;font-weight:normal;font-style:normal;font-family:'Liberation Sans',sans-serif;">A</div>
<div class="t" style="left:242.48px;top:219.74px;font-size:12.35px;transform:scaleX(1.0312);color:#242424;font-weight:normal;font-style:normal;font-family:'Liberation Sans',sans-serif;">Font</div>
<div class="t" style="left:448.20px;top:219.27px;font-size:12.79px;transform:scaleX(1.0087);color:#242424;font-weight:normal;font-style:normal;font-family:'Liberation Sans',sans-serif;">Alignment</div>
<div class="t" style="left:613.27px;top:160.07px;font-size:14.68px;transform:scaleX(1.0463);color:#242424;font-weight:normal;font-style:normal;font-family:'Liberation Sans',sans-serif;">Number</div>
<div class="t" style="left:728.63px;top:110.28px;font-size:15.26px;transform:scaleX(1.0084);color:#242424;font-weight:normal;font-style:normal;font-family:'Liberation Sans',sans-serif;">Conditional Formatting</div>
<div class="t" style="left:728.23px;top:148.45px;font-size:14.83px;transform:scaleX(0.9869);color:#242424;font-weight:normal;font-style:normal;font-family:'Liberation Sans',sans-serif;">Format as Table</div>
<div class="t" style="left:728.69px;top:185.29px;font-size:14.53px;transform:scaleX(0.9838);color:#242424;font-weight:normal;font-style:normal;font-family:'Liberation Sans',sans-serif;">Cell Styles</div>
<div class="t" style="left:783.71px;top:220.26px;font-size:12.21px;transform:scaleX(1.0002);color:#242424;font-weight:normal;font-style:normal;font-family:'Liberation Sans',sans-serif;">Styles</div>
<div class="t" style="left:943.38px;top:160.89px;font-size:13.95px;transform:scaleX(1.0369);color:#242424;font-weight:normal;font-style:normal;font-family:'Liberation Sans',sans-serif;">Cells</div>
<div class="t" style="left:1016.56px;top:160.89px;font-size:13.95px;transform:scaleX(1.1137);color:#242424;font-weight:normal;font-style:normal;font-family:'Liberation Sans',sans-serif;">Editing</div>
<div class="t" style="left:1096.20px;top:162.37px;font-size:14.68px;transform:scaleX(1.0439);color:#242424;font-weight:normal;font-style:normal;font-family:'Liberation Sans',sans-serif;">Add-ins</div>
<div class="t" style="left:1099.40px;top:220.33px;font-size:11.77px;transform:scaleX(1.1121);color:#242424;font-weight:normal;font-style:normal;font-family:'Liberation Sans',sans-serif;">Add-ins</div>
<div class="t" style="left:14.35px;top:257.32px;font-size:27.62px;transform:scaleX(0.9811);color:#1a1a1a;font-weight:normal;font-style:normal;font-family:'Liberation Sans',sans-serif;">C3</div>
<div class="t" style="left:653.09px;top:256.83px;font-size:28.20px;transform:scaleX(0.9783);color:#1a1a1a;font-weight:normal;font-style:normal;font-family:'Liberation Sans',sans-serif;">Hello World!</div>
<div class="t" style="left:328.10px;top:423.93px;font-size:28.20px;transform:scaleX(0.9478);color:#000000;font-weight:bold;font-style:normal;font-family:'Liberation Sans',sans-serif;">Hello World!</div>
<div class="t" style="left:112.30px;top:677.64px;font-size:16.13px;transform:scaleX(1.0775);color:#137845;font-weight:normal;font-style:normal;font-family:'Liberation Sans',sans-serif;-webkit-text-stroke:0.6px #137845">Sheet1</div>
<div class="t" style="left:18.98px;top:716.92px;font-size:13.08px;transform:scaleX(0.9791);color:#424242;font-weight:normal;font-style:normal;font-family:'Liberation Sans',sans-serif;">Ready</div>
<div class="t" style="left:170.70px;top:716.75px;font-size:13.52px;transform:scaleX(0.9734);color:#424242;font-weight:normal;font-style:normal;font-family:'Liberation Sans',sans-serif;">Accessibility: Good to go</div>
<div class="t" style="left:1181.73px;top:718.22px;font-size:12.50px;transform:scaleX(0.9892);color:#424242;font-weight:normal;font-style:normal;font-family:'Liberation Sans',sans-serif;">100%</div>
</body></html>
